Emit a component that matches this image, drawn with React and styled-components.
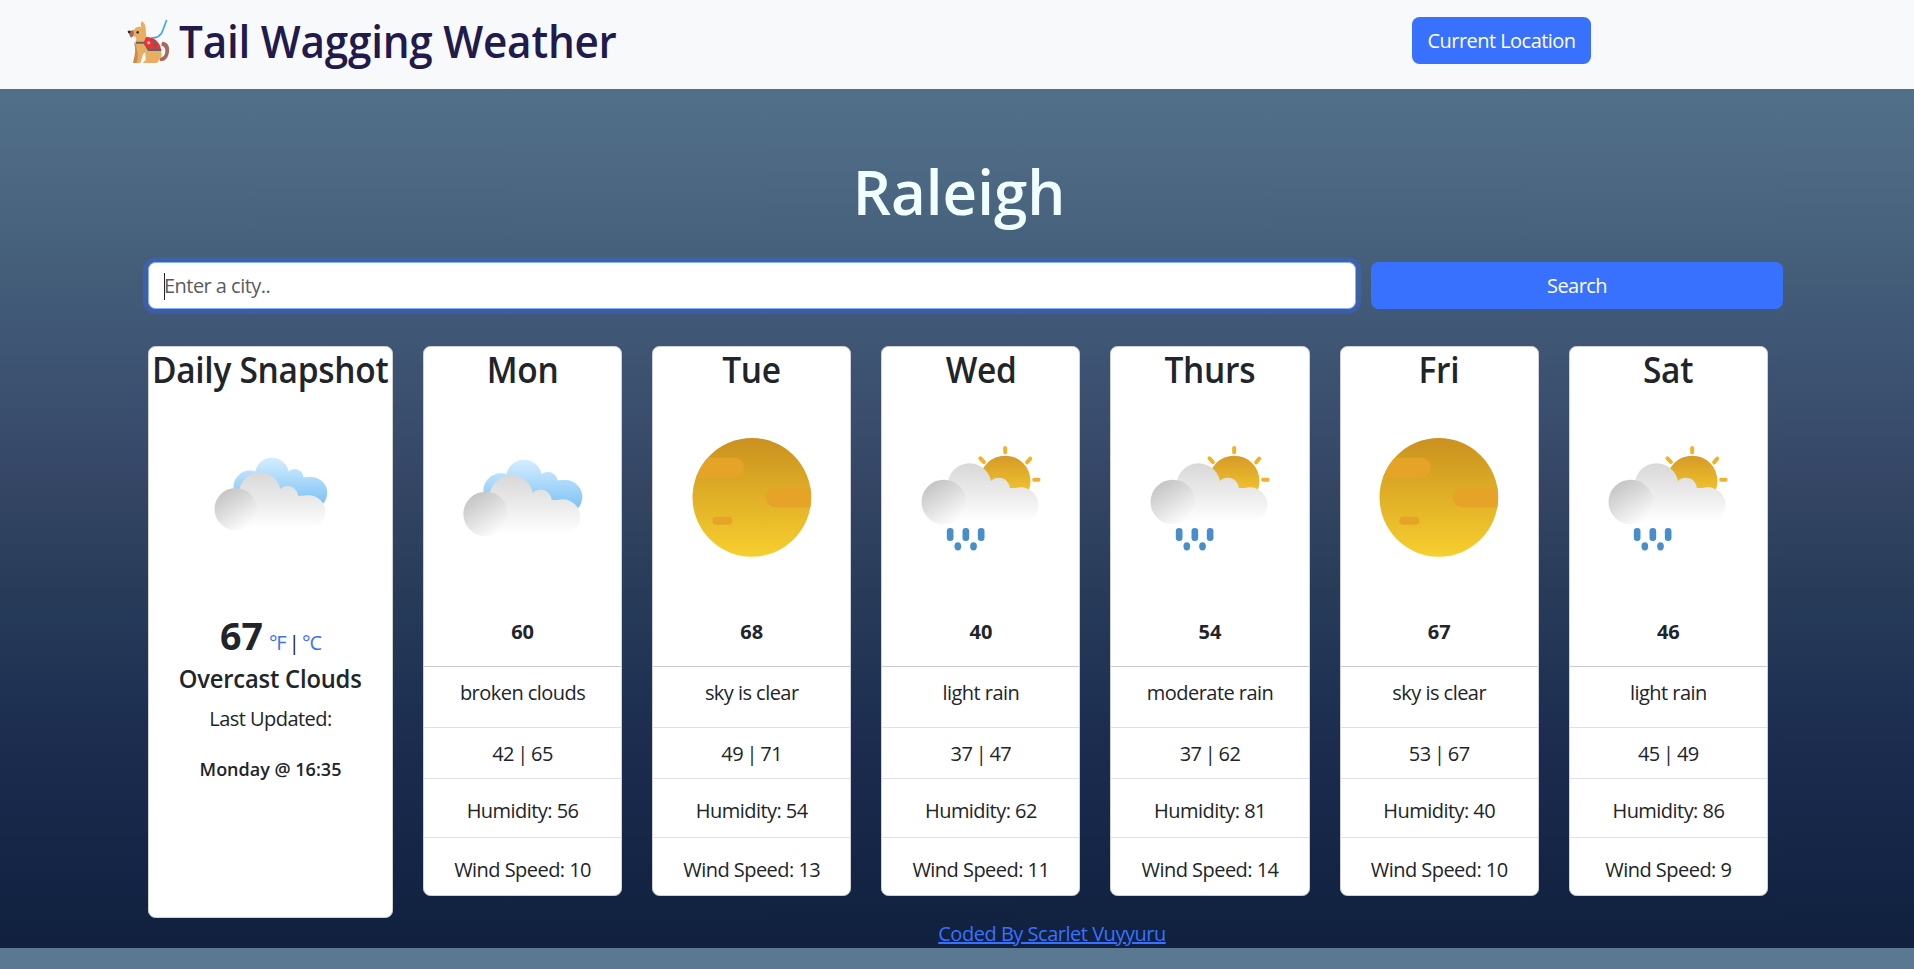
import React from 'react';
import styled, { createGlobalStyle } from 'styled-components';

const GlobalStyle = createGlobalStyle`
  *, *::before, *::after { box-sizing: border-box; }
  html { background: #5b7893; }
  body {
    margin: 0;
    font-family: "Open Sans", "Noto Sans", sans-serif;
    font-size: 20px;
    line-height: 30px;
    letter-spacing: -0.54px;
    color: #212529;
  }
`;

const Page = styled.div`
  height: 948px;
  background: linear-gradient(#5a7893 0%, #46617c 26%, #415a77 32%, #3c5070 41%, #344664 51%, #283c5a 62%, #1a2b4e 80%, #10203e 100%);
`;

const Header = styled.header`
  display: flex;
  justify-content: space-between;
  align-items: flex-start;
  height: 89px;
  padding: 12px 323px 0 127px;
  background: #f8f9fb;
`;

const Brand = styled.div`
  display: flex;
  align-items: flex-start;
  gap: 8px;
`;

const DogIcon = styled.svg`
  flex: none;
  width: 44px;
  height: 45px;
  margin-top: 7px;
`;

const BrandTitle = styled.h1`
  margin: 0;
  font-size: 44.5px;
  font-weight: 560;
  line-height: 57px;
  letter-spacing: -0.25px;
  white-space: nowrap;
  color: #211a4b;
  transform: scaleX(0.95);
  transform-origin: left;
`;

const Button = styled.button`
  height: 47px;
  padding: 1px 0 0;
  border: 0;
  border-radius: 7.5px;
  background: #3971ff;
  color: #fff;
  font: inherit;
  letter-spacing: inherit;
`;

const LocationButton = styled(Button)`
  width: 179px;
  margin-top: 5px;
`;

const Main = styled.main`
  padding: 65px 131px 0 148px;
`;

const City = styled.h1`
  width: 1622px;
  margin: 0;
  text-align: center;
  font-size: 61.6px;
  font-weight: 640;
  line-height: 75px;
  letter-spacing: 0;
  color: #f0ffff;
  transform: scaleX(0.975);
`;

const SearchForm = styled.form`
  display: grid;
  grid-template-columns: 1208px 412px;
  gap: 15px;
  margin: 33px 0 37px;
`;

const SearchField = styled.div`
  display: flex;
  align-items: center;
  height: 47px;
  padding: 1px 15px 0;
  border: 1px solid #86b0fe;
  border-radius: 7.5px;
  background: #fff;
  color: #595c5f;
  box-shadow: 0 0 0 5px rgba(57, 100, 210, 0.5);
`;

const Caret = styled.span`
  width: 1px;
  height: 27px;
  margin-right: -1px;
  background: #212529;
`;

const Cards = styled.div`
  display: flex;
  align-items: flex-start;
  gap: 30px;
`;

const Card = styled.section`
  width: ${(p) => (p.$wide ? '245px' : '199.17px')};
  height: ${(p) => (p.$wide ? '572px' : '550px')};
  flex: none;
  display: flex;
  flex-direction: column;
  align-items: center;
  border: 1px solid #cfd1d4;
  border-radius: 7.5px;
  background: #fff;
  text-align: center;
`;

const CardTitle = styled.h2`
  margin: 1px 0 0;
  font-size: 36px;
  font-weight: 560;
  line-height: 43px;
  letter-spacing: -0.3px;
  white-space: nowrap;
  transform: scaleX(0.93);
`;

const WeatherSvg = styled.svg`
  display: block;
  flex: none;
  width: ${(p) => p.$size}px;
  height: ${(p) => p.$size}px;
  margin-top: 31px;
`;

const DayTemp = styled.strong`
  padding: 45px 0 19px;
  letter-spacing: 0;
`;

const Row = styled.div`
  width: 100%;
  border-top: 1px solid ${(p) => p.$line || '#dfe1e6'};
  padding: ${(p) => p.$pad};
  white-space: nowrap;
`;

const RangeRow = styled(Row)`
  letter-spacing: -0.5px;
  word-spacing: -1.4px;
`;

const Now = styled.div`
  display: flex;
  align-items: baseline;
  gap: 6px;
  margin-top: 51px;
  line-height: 42px;
`;

const NowTemp = styled.strong`
  font-size: 37.5px;
  letter-spacing: 0;
`;

const Units = styled.span`
  letter-spacing: -1.1px;
  word-spacing: -0.8px;
`;

const Unit = styled.span`
  color: #3971ff;
`;

const Condition = styled.h3`
  margin: 0;
  font-size: 25px;
  font-weight: 560;
  line-height: 28px;
  letter-spacing: -0.2px;
  transform: scaleX(0.95);
`;

const Updated = styled.div`
  margin-top: 12px;
`;

const UpdatedTime = styled.div`
  margin-top: 20px;
  font-size: 18px;
  font-weight: 600;
  letter-spacing: 0;
`;

const Footer = styled.footer`
  width: 1808px;
  padding-top: 1px;
  text-align: center;
`;

const CreditLink = styled.a`
  color: #3971ff;
  letter-spacing: -0.48px;
  text-decoration: underline;
`;

function Defs() {
  return (
    <defs>
      <linearGradient id="cloud" gradientUnits="userSpaceOnUse" x1="0" y1="440" x2="0" y2="612">
        <stop offset="0" stopColor="#d9d9d9" />
        <stop offset="0.45" stopColor="#e9e9e9" />
        <stop offset="1" stopColor="#ffffff" />
      </linearGradient>
      <linearGradient id="puff" gradientUnits="userSpaceOnUse" x1="215" y1="495" x2="285" y2="612">
        <stop offset="0" stopColor="#c4c4c4" />
        <stop offset="0.45" stopColor="#dcdcdc" />
        <stop offset="1" stopColor="#fcfcfc" />
      </linearGradient>
      <linearGradient id="sky" gradientUnits="userSpaceOnUse" x1="0" y1="390" x2="0" y2="545">
        <stop offset="0" stopColor="#d4edff" />
        <stop offset="1" stopColor="#78c0f3" />
      </linearGradient>
      <linearGradient id="disc" x1="0" y1="0" x2="0" y2="1">
        <stop offset="0" stopColor="#ca911f" />
        <stop offset="1" stopColor="#f7cf2f" />
      </linearGradient>
      <linearGradient id="smallSun" gradientUnits="userSpaceOnUse" x1="0" y1="377" x2="0" y2="485">
        <stop offset="0" stopColor="#d59a27" />
        <stop offset="1" stopColor="#f0c42e" />
      </linearGradient>
      <clipPath id="discClip">
        <circle cx="1054.5" cy="502.5" r="178" />
      </clipPath>
    </defs>
  );
}

function Cloud({ shift = 0 }) {
  return (
    <g transform={`translate(0 ${shift})`}>
      <g fill="url(#cloud)">
        <circle cx="333" cy="502" r="66" />
        <circle cx="421" cy="512" r="33" />
        <circle cx="487" cy="561" r="53" />
        <path d="M290 510H487V614H260Z" />
      </g>
      <circle cx="256" cy="552" r="67" fill="url(#puff)" />
    </g>
  );
}

function CloudsIcon({ size = 150 }) {
  return (
    <WeatherSvg viewBox="143 276 450 450" $size={size}>
      <Defs />
      <g fill="url(#sky)">
        <circle cx="301" cy="482" r="52" />
        <circle cx="371" cy="443" r="54" />
        <circle cx="443" cy="453" r="28" />
        <circle cx="495" cy="501" r="51" />
        <path d="M301 451H495V540H301Z" />
      </g>
      <Cloud />
    </WeatherSvg>
  );
}

function SunIcon() {
  return (
    <WeatherSvg viewBox="830 276.5 450 450" $size={150}>
      <Defs />
      <circle cx="1054.5" cy="502.5" r="178" fill="url(#disc)" />
      <g clipPath="url(#discClip)" fill="#e5a427">
        <rect x="840" y="384" width="191" height="60" rx="30" />
        <rect x="1096" y="472" width="180" height="60" rx="30" />
        <rect x="936" y="561" width="60" height="24" rx="12" />
      </g>
    </WeatherSvg>
  );
}

function RainIcon() {
  return (
    <WeatherSvg viewBox="136.5 276 450 450" $size={150}>
      <Defs />
      <circle cx="434" cy="453" r="76" fill="url(#smallSun)" />
      <g stroke="#f5b02a" strokeWidth="12" strokeLinecap="round">
        <path d="M434 354V367M360 385L370 396M509 386L500 397M521 449.500H534" />
      </g>
      <g transform="translate(-6 0)">
        <Cloud shift={-36} />
      </g>
      <g fill="#488fc9">
        <rect x="259" y="594" width="20" height="39" rx="9.5" />
        <rect x="306" y="594" width="20" height="39" rx="9.5" />
        <rect x="352" y="594" width="20" height="39" rx="9.5" />
        <ellipse cx="292" cy="649" rx="10" ry="12.5" />
        <ellipse cx="339" cy="649" rx="10" ry="12.5" />
      </g>
    </WeatherSvg>
  );
}

function ServiceDog() {
  return (
    <DogIcon viewBox="51 57 132 135">
      <path d="M156 125C174 125 181 141 176 161C172 178 161 185 149 183L150 173C160 173 167 164 166 151C165 141 161 138 154 137Z" fill="#a56a59" />
      <path d="M71 127C79 145 75 166 69 189H89L97 150Z" fill="#c98b45" />
      <path d="M95 64C101 66 106 73 107 83C108 93 107 103 110 112L150 145C158 160 156 174 146 181C145 189 141 189 132 189H98L107 180L106 157L99 163C96 171 95 181 91 189H80C84 176 84 163 81 151L77 127C79 119 80 113 76 110L62 107L54 96L74 88C76 82 84 79 94 81C92 74 92 68 95 64Z" fill="#e9ad64" />
      <path d="M54 96L69 91C73 98 73 107 66 112C60 114 59 104 54 96Z" fill="#a56a59" />
      <path d="M53 93Q60 89 62 94Q62 100 57 100Q53 98 53 93Z" fill="#2b2527" />
      <circle cx="83" cy="97" r="4" fill="#3c3330" />
      <path d="M170 60L158 92C154 105 143 114 123 114" fill="none" stroke="#42a5ea" strokeWidth="5" />
      <path d="M108 112C128 110 151 124 153 150H116L101 129Z" fill="#e93339" />
      <path d="M77 128H103L116 150H154M130 117L138 148" fill="none" stroke="#616466" strokeWidth="6" />
      <path d="M109 112C120 111 131 118 132 129C130 140 120 145 110 140L101 130Z" fill="#e93339" />
      <circle cx="116" cy="128" r="4.500" fill="#ffc0c3" />
    </DogIcon>
  );
}

const icons = { clouds: CloudsIcon, sun: SunIcon, rain: RainIcon };

const days = [
  ['Mon', 'clouds', 60, 'broken clouds', '42 | 65', 56, 10],
  ['Tue', 'sun', 68, 'sky is clear', '49 | 71', 54, 13],
  ['Wed', 'rain', 40, 'light rain', '37 | 47', 62, 11],
  ['Thurs', 'rain', 54, 'moderate rain', '37 | 62', 81, 14],
  ['Fri', 'sun', 67, 'sky is clear', '53 | 67', 40, 10],
  ['Sat', 'rain', 46, 'light rain', '45 | 49', 86, 9],
];

function DayCard({ day }) {
  const [name, icon, temp, text, range, humidity, wind] = day;
  const Icon = icons[icon];
  return (
    <Card>
      <CardTitle>{name}</CardTitle>
      <Icon />
      <DayTemp>{temp}</DayTemp>
      <Row $line="#c9cbce" $pad="11px 0 19px">{text}</Row>
      <RangeRow $pad="11px 0 9px">{range}</RangeRow>
      <Row $pad="17px 0 11px">Humidity: {humidity}</Row>
      <Row $pad="17px 0 11px">Wind Speed: {wind}</Row>
    </Card>
  );
}

export default function App() {
  return (
    <>
      <GlobalStyle />
      <Page>
        <Header>
          <Brand>
            <ServiceDog />
            <BrandTitle>Tail Wagging Weather</BrandTitle>
          </Brand>
          <LocationButton>Current Location</LocationButton>
        </Header>
        <Main>
          <City>Raleigh</City>
          <SearchForm>
            <SearchField>
              <Caret />
              Enter a city..
            </SearchField>
            <Button type="button">Search</Button>
          </SearchForm>
          <Cards>
            <Card $wide>
              <CardTitle>Daily Snapshot</CardTitle>
              <CloudsIcon size={142} />
              <Now>
                <NowTemp>67</NowTemp>
                <Units>
                  <Unit>°F</Unit> | <Unit>°C</Unit>
                </Units>
              </Now>
              <Condition>Overcast Clouds</Condition>
              <Updated>Last Updated:</Updated>
              <UpdatedTime>Monday @ 16:35</UpdatedTime>
            </Card>
            {days.map((day) => (
              <DayCard key={day[0]} day={day} />
            ))}
          </Cards>
          <Footer>
            <CreditLink>Coded By Scarlet Vuyyuru</CreditLink>
          </Footer>
        </Main>
      </Page>
    </>
  );
}
